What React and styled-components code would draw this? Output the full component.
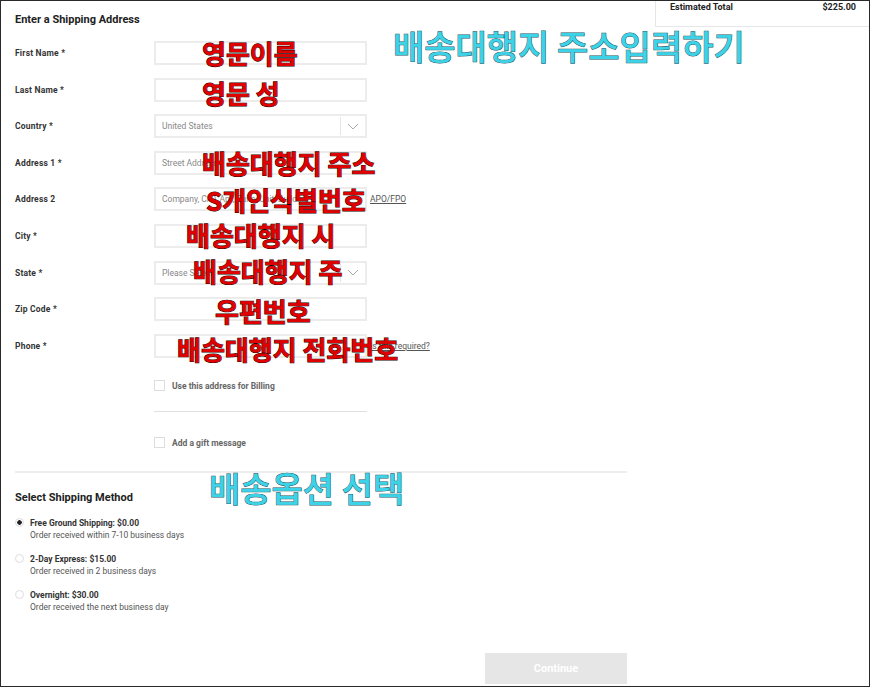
import React from "react";
import styled, { createGlobalStyle } from "styled-components";

const Global = createGlobalStyle`
  html, body { margin: 0; padding: 0; background: #fff; }
  body { font-family: Roboto, "Liberation Sans", Arial, sans-serif; color: #222; }
`;

const fields = [
  { label: "First Name *" },
  { label: "Last Name *" },
  { label: "Country *", select: "United States" },
  { label: "Address 1 *", placeholder: "Street Address" },
  { label: "Address 2", placeholder: "Company, C/O, Apt, Suite, Unit, Building", link: "APO/FPO" },
  { label: "City *" },
  { label: "State *", select: "Please Select" },
  { label: "Zip Code *" },
  { label: "Phone *", link: "Is this required?" },
];

const methods = [
  { title: "Free Ground Shipping: $0.00", sub: "Order received within 7-10 business days", checked: true },
  { title: "2-Day Express: $15.00", sub: "Order received in 2 business days" },
  { title: "Overnight: $30.00", sub: "Order received the next business day" },
];

// annotation overlays drawn on top of the screenshot
const notes = [
  { text: "배송대행지 주소입력하기", x: 392, y: 28, cyan: true, size: 34 },
  { text: "영문이름", x: 201, y: 39 },
  { text: "영문 성", x: 201, y: 79 },
  { text: "배송대행지 주소", x: 201, y: 149 },
  { text: "S개인식별번호", x: 205, y: 186 },
  { text: "배송대행지 시", x: 185, y: 221 },
  { text: "배송대행지 주", x: 192, y: 257 },
  { text: "우편번호", x: 214, y: 297 },
  { text: "배송대행지 전화번호", x: 176, y: 335 },
  { text: "배송옵션 선택", x: 208, y: 470, cyan: true, size: 34 },
];

const App = () => (
  <>
    <Global />
    <Frame>
      <Summary>
        <span>Estimated Total</span>
        <span>$225.00</span>
      </Summary>
      <Main>
        <Title>Enter a Shipping Address</Title>
        <Rows>
          {fields.map((f) => (
            <Row key={f.label}>
              <Label>{f.label}</Label>
              <Input>
                <InputText>{f.select || f.placeholder || ""}</InputText>
                {f.select && (
                  <Caret>
                    <svg width="12" height="7" viewBox="0 0 12 7">
                      <path d="M1 1l5 5 5-5" fill="none" stroke="#aaa" strokeWidth="1" />
                    </svg>
                  </Caret>
                )}
              </Input>
              {f.link && <Link>{f.link}</Link>}
            </Row>
          ))}
        </Rows>
        <Checks>
          <Check><Box />Use this address for Billing</Check>
          <ShortRule />
          <Check><Box />Add a gift message</Check>
        </Checks>
        <Rule />
        <Title2>Select Shipping Method</Title2>
        <Methods>
          {methods.map((m) => (
            <Method key={m.title}>
              <Radio $on={m.checked} />
              <div>
                <MethodTitle>{m.title}</MethodTitle>
                <MethodSub>{m.sub}</MethodSub>
              </div>
            </Method>
          ))}
        </Methods>
        <Footer>
          <Continue>Continue</Continue>
        </Footer>
      </Main>
      {notes.map((n) => (
        <Note key={n.text} $cyan={n.cyan} $size={n.size} style={{ left: n.x, top: n.y }}>
          {n.text}
        </Note>
      ))}
    </Frame>
  </>
);

export default App;

const Frame = styled.div`
  position: relative;
  width: 870px;
  height: 687px;
  box-sizing: border-box;
  border: 1px solid #2a2a2a;
  overflow: hidden;
`;

const Summary = styled.div`
  position: absolute;
  top: -1px;
  right: 0;
  width: 214px;
  height: 27px;
  box-sizing: border-box;
  padding: 0 13px 0 14px;
  border-left: 1px solid #e6e6e6;
  border-bottom: 1px solid #e6e6e6;
  display: flex;
  justify-content: space-between;
  align-items: flex-start;
  padding-top: 2px;
  font-size: 9px;
  font-weight: 700;
  color: #222;
`;

const Main = styled.div`
  width: 612px;
  padding: 12px 0 0 14px;
`;

const Title = styled.div`
  font-size: 11px;
  font-weight: 700;
  color: #222;
  height: 16px;
`;

const Title2 = styled(Title)`
  margin-top: 18px;
`;

const Rows = styled.div`
  display: flex;
  flex-direction: column;
  gap: 12.6px;
  margin-top: 12px;
`;

const Row = styled.div`
  display: flex;
  align-items: center;
  height: 24px;
`;

const Label = styled.div`
  width: 139px;
  font-size: 8.5px;
  font-weight: 700;
  color: #333;
  letter-spacing: 0.2px;
`;

const Input = styled.div`
  width: 213px;
  height: 24px;
  box-sizing: border-box;
  border: 2px solid #ececec;
  display: flex;
  align-items: center;
`;

const InputText = styled.div`
  flex: 1;
  padding-left: 6px;
  font-size: 8.5px;
  color: #888;
`;

const Caret = styled.div`
  width: 24px;
  height: 18px;
  border-left: 1px solid #e6e6e6;
  display: flex;
  align-items: center;
  justify-content: center;
`;

const Link = styled.div`
  margin-left: 3px;
  font-size: 8.5px;
  color: #555;
  text-decoration: underline;
`;

const Checks = styled.div`
  margin: 21px 0 0 139px;
  width: 213px;
`;

const Check = styled.div`
  display: flex;
  align-items: center;
  gap: 7px;
  font-size: 8.5px;
  font-weight: 700;
  color: #666;
  height: 14px;
`;

const Box = styled.span`
  width: 9px;
  height: 9px;
  border: 1px solid #ddd;
`;

const ShortRule = styled.div`
  height: 1px;
  background: #e0e0e0;
  margin: 18px 0 24px;
`;

const Rule = styled.div`
  height: 2px;
  background: #eee;
  margin-top: 21px;
`;

const Methods = styled.div`
  display: flex;
  flex-direction: column;
  gap: 12px;
  margin-top: 10px;
`;

const Method = styled.div`
  display: flex;
  gap: 6px;
`;

const Radio = styled.span`
  width: 9px;
  height: 9px;
  margin-top: 1px;
  border-radius: 50%;
  border: 1px solid #ddd;
  box-sizing: border-box;
  background: ${(p) => (p.$on ? "radial-gradient(circle, #222 0 2px, #fff 2.5px)" : "#fff")};
`;

const MethodTitle = styled.div`
  font-size: 8.5px;
  font-weight: 700;
  color: #333;
  line-height: 12px;
`;

const MethodSub = styled.div`
  font-size: 8.5px;
  color: #555;
  line-height: 12px;
`;

const Footer = styled.div`
  display: flex;
  justify-content: flex-end;
  margin-top: 40px;
`;

const Continue = styled.button`
  width: 142px;
  height: 31px;
  border: none;
  background: #e6e6e6;
  color: #fff;
  font-family: Roboto, "Liberation Sans", sans-serif;
  font-size: 11px;
  font-weight: 700;
`;

const Note = styled.div`
  position: absolute;
  white-space: nowrap;
  font-family: "Noto Sans CJK KR", "Noto Sans", sans-serif;
  font-weight: ${(p) => (p.$cyan ? 500 : 700)};
  font-size: ${(p) => p.$size || 26}px;
  line-height: 1;
  color: ${(p) => (p.$cyan ? "#3cd3e8" : "#e00000")};
  -webkit-text-stroke: ${(p) => (p.$cyan ? "1px #1d5560" : "1px #200")};
  paint-order: stroke fill;
`;
